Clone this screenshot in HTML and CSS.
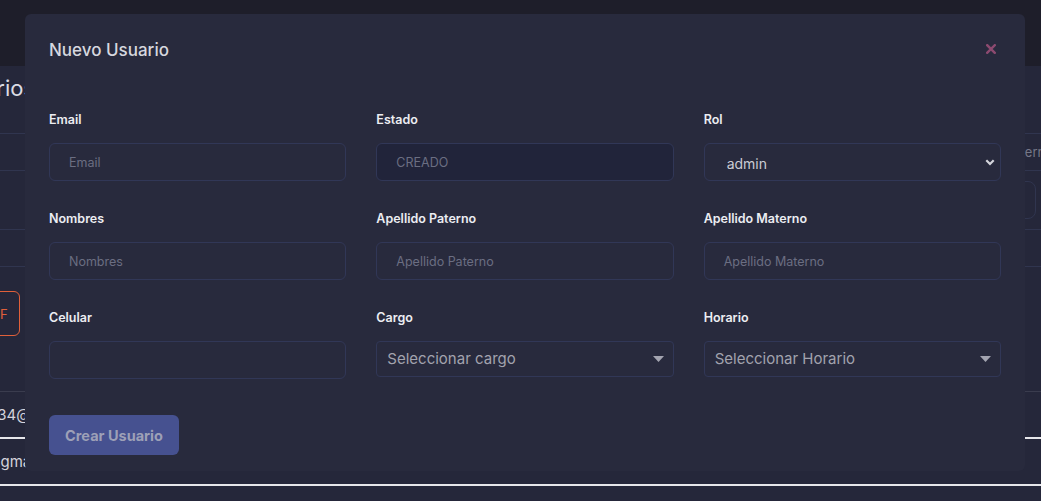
FILE: index.html
```html
<!DOCTYPE html>
<html lang="es">
<head>
<meta charset="utf-8">
<title>Nuevo Usuario</title>
<link rel="stylesheet" href="styles.css">
</head>
<body>
<div class="page">
  <header class="topbar"></header>
  <main class="content">
    <h2 class="page-title">Usuarios</h2>
    <div class="band band-1"><span class="ghost-ph">Apellido Materno</span></div>
    <div class="band band-2"><div class="ghost-box"></div></div>
    <div class="band band-3"></div>
    <div class="ghost-actions"><span class="ghost-pdf">PDF</span></div>
    <div class="ghost-table">
      <div class="ghost-row row-a">1234@gmail.com</div>
      <div class="ghost-row row-b">@gmail.com</div>
    </div>
  </main>

  <div class="modal">
    <div class="modal-header">
      <h3 class="modal-title">Nuevo Usuario</h3>
      <span class="modal-close" aria-label="Cerrar">
        <svg width="10" height="10" viewBox="0 0 10 10"><path d="M1.2 1.2 8.8 8.8M8.8 1.2 1.2 8.8" stroke="#8c4a70" stroke-width="2.4" stroke-linecap="square"/></svg>
      </span>
    </div>
    <form class="modal-body">
      <div class="field">
        <label class="label">Email</label>
        <div class="input"><span class="ph">Email</span></div>
      </div>
      <div class="field">
        <label class="label">Estado</label>
        <div class="input input-disabled"><span class="ph">CREADO</span></div>
      </div>
      <div class="field">
        <label class="label">Rol</label>
        <div class="input select-native">
          <span class="value">admin</span>
          <svg width="10" height="7" viewBox="0 0 10 7"><path d="M1.3 1.3 5 5 8.7 1.3" fill="none" stroke="#d4d5dc" stroke-width="2.2"/></svg>
        </div>
      </div>
      <div class="field">
        <label class="label">Nombres</label>
        <div class="input"><span class="ph">Nombres</span></div>
      </div>
      <div class="field">
        <label class="label">Apellido Paterno</label>
        <div class="input"><span class="ph">Apellido Paterno</span></div>
      </div>
      <div class="field">
        <label class="label">Apellido Materno</label>
        <div class="input"><span class="ph">Apellido Materno</span></div>
      </div>
      <div class="field">
        <label class="label">Celular</label>
        <div class="input"></div>
      </div>
      <div class="field">
        <label class="label">Cargo</label>
        <div class="select2">
          <span class="s2-text">Seleccionar cargo</span>
          <svg width="11" height="6" viewBox="0 0 11 6"><path d="M0 0h11L5.5 6z" fill="#a3a4b0"/></svg>
        </div>
      </div>
      <div class="field">
        <label class="label">Horario</label>
        <div class="select2">
          <span class="s2-text">Seleccionar Horario</span>
          <svg width="11" height="6" viewBox="0 0 11 6"><path d="M0 0h11L5.5 6z" fill="#a3a4b0"/></svg>
        </div>
      </div>
    </form>
    <div class="modal-footer">
      <button type="button" class="btn-primary">Crear Usuario</button>
    </div>
  </div>
</div>
</body>
</html>
```
FILE: styles.css
```css
* { box-sizing: border-box; }
html, body { margin: 0; padding: 0; }
body {
  font-family: "Inter", "Noto Sans", sans-serif;
  background: #25273a;
  overflow: hidden;
}
.page {
  position: relative;
  width: 1041px;
  height: 501px;
  overflow: hidden;
  background: #25273a;
}
.topbar {
  height: 66px;
  background: #1e1e2a;
}
.content {
  display: flex;
  flex-direction: column;
}
.page-title {
  margin: 7px 0 0 -57px;
  height: 60px;
  font-size: 22px;
  font-weight: 400;
  line-height: 30px;
  color: #dcdce4;
}
.band {
  border-top: 1px solid #30354f;
  border-bottom: 1px solid #30354f;
  height: 38px;
  display: flex;
  align-items: center;
  justify-content: flex-end;
}
.band-1 { margin-right: -12px; }
.ghost-ph { font-size: 13px; color: #767888; }
.band-2 {
  border: none;
  margin-top: 10px;
  height: 38px;
}
.ghost-box {
  width: 300px;
  height: 38px;
  margin-right: 5px;
  border: 1px solid #30354f;
  border-radius: 8px;
}
.band-3 { margin-top: 10px; }
.ghost-actions {
  margin-top: 24px;
  height: 45px;
  display: flex;
}
.ghost-pdf {
  margin-left: -30px;
  width: 50px;
  height: 45px;
  border: 1.5px solid #e0603a;
  border-radius: 6px;
  color: #e0603a;
  font-size: 13px;
  display: flex;
  align-items: center;
  justify-content: center;
}
.ghost-table {
  margin-top: 55px;
  border-top: 1px solid #3a3c4e;
}
.ghost-row {
  height: 47px;
  line-height: 46px;
  font-size: 15px;
  color: #d4d4dc;
  border-bottom: 2px solid #e6e6ea;
}
.row-a { margin-left: -18px; }
.row-b { margin-left: -14px; }

/* Modal */
.modal {
  position: absolute;
  left: 25px;
  top: 14px;
  width: 1000px;
  background: #282a3d;
  border-radius: 6px;
  padding: 24px 24px 16px;
}
.modal-header {
  display: flex;
  align-items: center;
  justify-content: space-between;
  height: 24px;
}
.modal-title {
  margin: 0;
  font-size: 17px;
  font-weight: 500;
  line-height: 24px;
  color: #d6d7df;
}
.modal-close {
  display: flex;
  margin-right: 5px;
  margin-top: -3px;
}
.modal-body {
  margin: 48px 0 0;
  display: grid;
  grid-template-columns: repeat(3, 1fr);
  column-gap: 30px;
  row-gap: 28px;
}
.field { display: flex; flex-direction: column; }
.label {
  font-size: 12.5px;
  font-weight: 600;
  line-height: 20px;
  color: #ecedf2;
  margin-bottom: 13px;
}
.input {
  height: 38px;
  border: 1px solid #313757;
  border-radius: 6px;
  padding: 0 19px;
  display: flex;
  align-items: center;
  font-size: 12.5px;
}
.ph { color: #6b6e82; }
.input-disabled { background: #21243a; }
.select-native {
  justify-content: space-between;
  padding: 0 5px 0 22px;
}
.select-native .value {
  font-size: 14px;
  color: #cbccd4;
  padding-top: 2px;
}
.select2 {
  height: 36px;
  border: 1px solid #313757;
  border-radius: 4px;
  padding: 0 9px 0 10px;
  display: flex;
  align-items: center;
  justify-content: space-between;
}
.s2-text {
  font-size: 15px;
  color: #a2a3ae;
  margin-top: -2px;
}
.modal-footer {
  margin-top: 36px;
  display: flex;
}
.btn-primary {
  height: 40px;
  padding: 0 14px;
  width: 130px;
  border: none;
  border-radius: 6px;
  background: #465190;
  color: #9da0b7;
  font-family: inherit;
  font-size: 14.5px;
  font-weight: 700;
}
```
